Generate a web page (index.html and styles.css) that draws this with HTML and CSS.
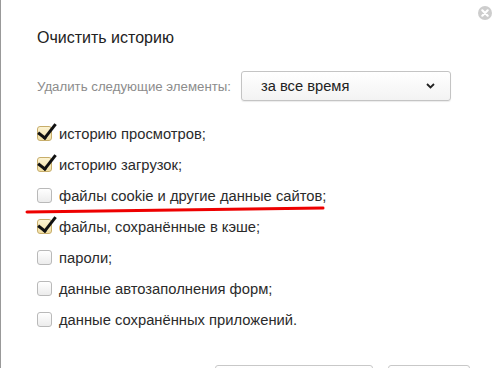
FILE: index.html
```html
<!DOCTYPE html>
<html lang="ru">
<head>
  <meta charset="UTF-8" />
  <title>Очистить историю</title>
  <link rel="stylesheet" href="styles.css">
</head>
<body>
  <div class="dialog">
    <button class="close" type="button" aria-label="Закрыть">
      <svg width="14" height="14" viewBox="0 0 14 14">
        <circle cx="7" cy="7" r="7" fill="#cdcdcd"/>
        <path d="M4.3 4.3 L9.7 9.7 M9.7 4.3 L4.3 9.7" stroke="#fff" stroke-width="2.2" stroke-linecap="round"/>
      </svg>
    </button>

    <h1 class="title">Очистить историю</h1>

    <div class="period">
      <span class="period-label">Удалить следующие элементы:</span>
      <div class="select">
        <span>за все время</span>
        <svg width="9" height="6" viewBox="0 0 9 6"><path d="M1 1 L4.5 4.5 L8 1" fill="none" stroke="#222" stroke-width="1.8"/></svg>
      </div>
    </div>

    <ul class="items">
      <li class="item checked"><span class="box"></span>историю просмотров;</li>
      <li class="item checked"><span class="box"></span>историю загрузок;</li>
      <li class="item"><span class="box"></span>файлы cookie и другие данные сайтов;</li>
      <li class="item checked"><span class="box"></span>файлы, сохранённые в кэше;</li>
      <li class="item"><span class="box"></span>пароли;</li>
      <li class="item"><span class="box"></span>данные автозаполнения форм;</li>
      <li class="item"><span class="box"></span>данные сохранённых приложений.</li>
    </ul>

    <!-- buttons sit below the visible area, only their top edges show -->
    <div class="actions">
      <button class="btn btn-main" type="button" aria-label="Очистить историю"></button>
      <button class="btn btn-cancel" type="button" aria-label="Отмена"></button>
    </div>

    <!-- red hand-drawn underline -->
    <svg class="mark" width="330" height="12" viewBox="0 0 330 12">
      <path d="M26 7 Q 140 5.5 322 3" fill="none" stroke="#ee0000" stroke-width="3" stroke-linecap="round"/>
    </svg>
  </div>
</body>
</html>
```

FILE: styles.css
```css
* { box-sizing: border-box; margin: 0; padding: 0; }
html, body { height: 100%; overflow: hidden; }
body {
  background: #fff;
  font-family: Arial, "Liberation Sans", sans-serif;
  color: #333;
}

.dialog {
  position: relative;
  height: 100%;
  border-left: 1px solid #999;
  padding: 28px 0 0 36px;
}

.close {
  position: absolute; top: 6px; right: 8px;
  border: none; background: none; cursor: pointer;
  width: 14px; height: 14px; display: block;
}
.close svg { display: block; }

.title {
  font-size: 16px;
  font-weight: normal;
  line-height: 20px;
  color: #222;
}

.period {
  display: flex;
  align-items: center;
  gap: 10px;
  margin-top: 23px;
}
.period-label {
  font-size: 13.25px;
  color: #8c8c8c;
}
.select {
  width: 210px; height: 30px;
  display: flex; align-items: center; justify-content: space-between;
  padding: 0 15px 0 19px;
  border: 1px solid #c4c4c4;
  border-radius: 3px;
  background: linear-gradient(#fff, #f3f3f3);
  box-shadow: 0 1px 1px rgba(0,0,0,0.08);
  font-size: 14.7px;
  color: #222;
}

.items {
  list-style: none;
  margin-top: 17px;
}
.item {
  height: 31px;
  display: flex; align-items: center;
  gap: 7px;
  font-size: 14.75px;
  color: #2b2b2b;
}
.box {
  position: relative;
  width: 15px; height: 15px;
  border: 1px solid #b9b9b9;
  border-radius: 3px;
  background: linear-gradient(#fff, #ececec);
  flex: none;
}
.checked .box {
  border-color: #c7ad6a;
  background: linear-gradient(#fcf3d2, #f1dfa4);
}
.checked .box::after {
  content: "";
  position: absolute;
  left: 4px; top: -7px;
  width: 7px; height: 16px;
  border: solid #111;
  border-width: 0 3px 3px 0;
  transform: rotate(38deg);
}

.actions {
  display: flex;
  gap: 15px;
  margin: 30px 0 0 178px;
}
.btn {
  height: 30px;
  border: 1px solid #c8c8c8;
  border-radius: 3px;
  background: linear-gradient(#fff, #f2f2f2);
}
.btn-main { width: 158px; }
.btn-cancel { width: 82px; }

.mark {
  position: absolute;
  left: 0; top: 205px;
  pointer-events: none;
}
```
